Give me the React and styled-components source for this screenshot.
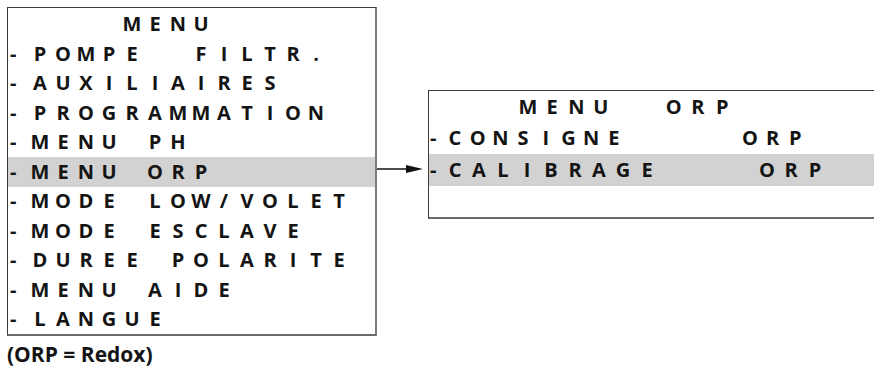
import React from 'react';
import styled, { createGlobalStyle } from 'styled-components';

const Global = createGlobalStyle`
  html, body { margin: 0; padding: 0; background: #ffffff; overflow: hidden; }
  body { font-family: "Open Sans", "Liberation Sans", sans-serif; }
`;

const Page = styled.div`
  width: 874px;
  height: 371px;
  padding: 7px 0 0 7px;
  box-sizing: border-box;
  display: flex;
  flex-direction: column;
  overflow: hidden;
`;

const Top = styled.div`
  display: flex;
  align-items: flex-start;
`;

const Screen = styled.div`
  flex-shrink: 0;
  box-sizing: border-box;
  width: ${p => p.$w}px;
  margin-top: ${p => p.$mt || 0}px;
  padding-top: ${p => p.$pt || 0}px;
  border-top: 1px solid #3a3a3a;
  border-left: 1px solid #3a3a3a;
  border-right: 2px solid #7a7a7a;
  border-bottom: 2px solid #6a6a6a;
  background: #ffffff;
  display: flex;
  flex-direction: column;
`;

const Row = styled.div`
  display: flex;
  align-items: center;
  height: ${p => p.$h}px;
  background: ${p => (p.$active ? '#d2d2d2' : 'transparent')};
  color: #141414;
  font-family: "Open Sans", "Liberation Sans", sans-serif;
  font-weight: 700;
  font-size: 20px;
  line-height: 1;
  white-space: pre;
`;

const Lead = styled.span`
  flex-shrink: 0;
  box-sizing: border-box;
  width: ${p => p.$w}px;
  padding-left: ${p => p.$pad}px;
`;

const Cell = styled.span`
  flex-shrink: 0;
  width: ${p => p.$w}px;
  text-align: center;
`;

const ArrowWrap = styled.div`
  flex-shrink: 0;
  width: 51px;
  height: 12px;
  margin-top: 156px;
  display: flex;
`;

const Caption = styled.div`
  margin-top: 6px;
  font-family: "Open Sans", "Liberation Sans", sans-serif;
  font-weight: 700;
  font-size: 21px;
  line-height: 25px;
  color: #141414;
`;

const leftRows = [
  { text: '    MENU' },
  { text: 'POMPE  FILTR.', dash: true },
  { text: 'AUXILIAIRES', dash: true },
  { text: 'PROGRAMMATION', dash: true },
  { text: 'MENU PH', dash: true },
  { text: 'MENU ORP', dash: true, active: true },
  { text: 'MODE LOW/VOLET', dash: true },
  { text: 'MODE ESCLAVE', dash: true },
  { text: 'DUREE POLARITE', dash: true },
  { text: 'MENU AIDE', dash: true },
  { text: 'LANGUE', dash: true },
];

const rightRows = [
  { text: '   MENU  ORP', pitch: 24.3 },
  { text: 'CONSIGNE     ORP', dash: true, pitch: 22.7 },
  { text: 'CALIBRAGE    ORP', dash: true, pitch: 24, active: true },
  { text: '', pitch: 24 },
];

function MenuScreen({ rows, width, rowH, firstCenter, innerLeft, dashPad, mt, pt, pitch }) {
  return (
    <Screen $w={width} $mt={mt} $pt={pt}>
      {rows.map((r, i) => {
        const p = r.pitch || pitch;
        const lead = firstCenter - p / 2 - innerLeft;
        return (
          <Row key={i} $h={rowH} $active={r.active}>
            <Lead $w={lead} $pad={dashPad}>{r.dash ? '-' : ''}</Lead>
            {Array.from(r.text).map((ch, j) => (
              <Cell key={j} $w={p}>{ch}</Cell>
            ))}
          </Row>
        );
      })}
    </Screen>
  );
}

function Arrow() {
  return (
    <ArrowWrap>
      <svg width="51" height="12" viewBox="0 0 51 12">
        <line x1="0" y1="6" x2="34" y2="6" stroke="#111" strokeWidth="1.6" />
        <polygon points="29,2 46,6 29,10" fill="#111" />
      </svg>
    </ArrowWrap>
  );
}

export default function App() {
  return (
    <>
      <Global />
      <Page>
        <Top>
          <MenuScreen
            rows={leftRows}
            width={370}
            rowH={29.5}
            firstCenter={40}
            innerLeft={8}
            dashPad={2}
            pt={1.5}
            pitch={23}
          />
          <Arrow />
          <MenuScreen
            rows={rightRows}
            width={470}
            rowH={31.5}
            firstCenter={455}
            innerLeft={429}
            dashPad={1}
            mt={83}
            pt={0}
            pitch={23}
          />
        </Top>
        <Caption>(ORP = Redox)</Caption>
      </Page>
    </>
  );
}
